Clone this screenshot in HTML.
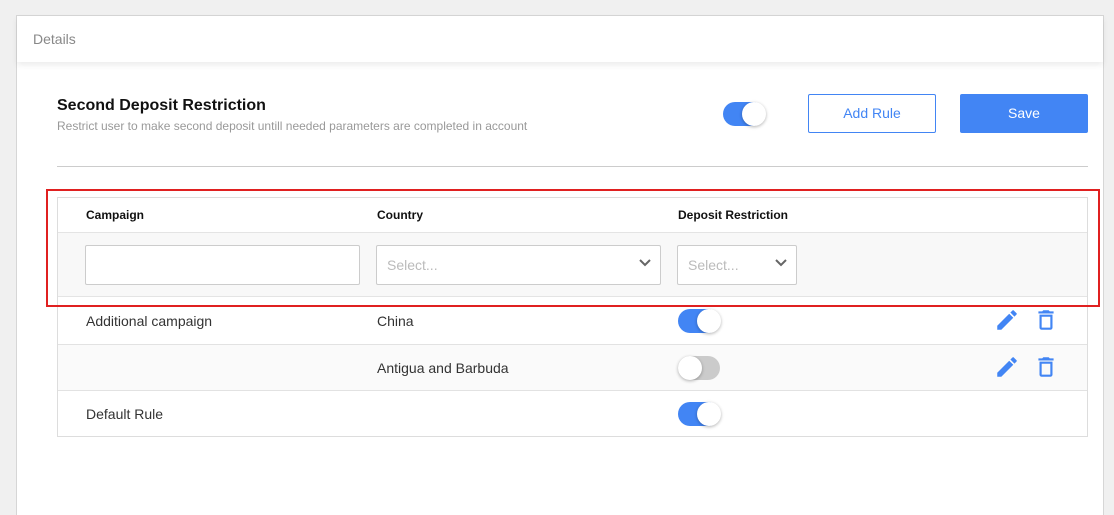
<!DOCTYPE html>
<html><head><style>
*{box-sizing:border-box;margin:0;padding:0}
body{width:1114px;height:506px;background:#f0f0f0;font-family:"Liberation Sans",sans-serif;position:relative;overflow:hidden}
.abs{position:absolute}
.card{left:16px;top:15px;width:1088px;height:500px;background:#fff;border-left:1px solid #d6d6d6;border-top:1px solid #d6d6d6;border-right:1px solid #d6d6d6}
.hdr{left:17px;top:16px;width:1086px;height:46px;background:#fff;box-shadow:0 3px 6px rgba(0,0,0,.08)}
.tog{width:42px;height:24px;border-radius:12px}
.tog .k{position:absolute;top:0;width:24px;height:24px;border-radius:50%;background:#fff;box-shadow:0 1px 3px rgba(0,0,0,.3)}
.on{background:#4285f4}.on .k{right:-1px}
.off{background:#cbcbcb}.off .k{left:0}
.sel{height:40px;border:1px solid #ccc;background:#fff;border-radius:2px;color:#bbb;font-size:14px;padding:11px 10px}
.txt{font-size:14px;color:#333}
.th{font-size:12px;font-weight:bold;color:#111}
</style></head><body>
<div class="abs card"></div>
<div class="abs hdr"></div>
<div class="abs" style="left:33px;top:31px;font-size:14px;color:#888">Details</div>
<div class="abs" style="left:57px;top:97px;font-size:16px;font-weight:bold;color:#111">Second Deposit Restriction</div>
<div class="abs" style="left:57px;top:119px;font-size:12px;color:#999">Restrict user to make second deposit untill needed parameters are completed in account</div>
<div class="abs tog on" style="left:723px;top:102px"><div class="k"></div></div>
<div class="abs" style="left:808px;top:94px;width:128px;height:39px;border:1px solid #4285f4;border-radius:2px;color:#4285f4;font-size:14px;text-align:center;line-height:37px">Add Rule</div>
<div class="abs" style="left:960px;top:94px;width:128px;height:39px;background:#4285f4;border-radius:2px;color:#fff;font-size:14px;text-align:center;line-height:39px">Save</div>
<div class="abs" style="left:57px;top:166px;width:1031px;height:1px;background:#ccc"></div>
<div class="abs" style="left:57px;top:197px;width:1031px;height:240px;border:1px solid #ddd"></div>
<div class="abs" style="left:58px;top:232px;width:1029px;height:65px;background:#f8f8f8;border-top:1px solid #e4e4e4;border-bottom:1px solid #e4e4e4"></div>
<div class="abs" style="left:58px;top:344px;width:1029px;height:47px;background:#fafafa;border-top:1px solid #e2e2e2;border-bottom:1px solid #e2e2e2"></div>
<div class="abs th" style="left:86px;top:208px">Campaign</div>
<div class="abs th" style="left:377px;top:208px">Country</div>
<div class="abs th" style="left:678px;top:208px">Deposit Restriction</div>
<div class="abs sel" style="left:85px;top:245px;width:275px"></div>
<div class="abs sel" style="left:376px;top:245px;width:285px">Select...</div>
<div class="abs sel" style="left:677px;top:245px;width:120px">Select...</div>
<svg class="abs" style="left:639px;top:259px" width="12" height="8"><path d="M1 1l5 5 5-5" stroke="#666" stroke-width="2" fill="none"/></svg>
<svg class="abs" style="left:775px;top:259px" width="12" height="8"><path d="M1 1l5 5 5-5" stroke="#666" stroke-width="2" fill="none"/></svg>
<div class="abs" style="left:46px;top:189px;width:1054px;height:118px;border:2px solid #e02020"></div>
<div class="abs txt" style="left:86px;top:313px">Additional campaign</div>
<div class="abs txt" style="left:377px;top:313px">China</div>
<div class="abs txt" style="left:377px;top:360px">Antigua and Barbuda</div>
<div class="abs txt" style="left:86px;top:406px">Default Rule</div>
<div class="abs tog on" style="left:678px;top:309px"><div class="k"></div></div>
<div class="abs tog off" style="left:678px;top:356px"><div class="k"></div></div>
<div class="abs tog on" style="left:678px;top:402px"><div class="k"></div></div>
<svg class="abs" style="left:994px;top:307px" width="26" height="26" viewBox="0 0 24 24"><path fill="#4285f4" d="M3 17.25V21h3.75L17.8 9.94l-3.75-3.75L3 17.25zM20.7 7.04a1 1 0 000-1.41l-2.34-2.34a1 1 0 00-1.41 0l-1.83 1.83 3.75 3.75 1.83-1.83z"/></svg>
<svg class="abs" style="left:1033px;top:307px" width="26" height="26" viewBox="0 0 24 24"><path fill="#4285f4" d="M6 19a2 2 0 002 2h8a2 2 0 002-2V7H6v12zm2-10h8v10H8V9zm7.5-5l-1-1h-5l-1 1H5v2h14V4z"/></svg>
<svg class="abs" style="left:994px;top:354px" width="26" height="26" viewBox="0 0 24 24"><path fill="#4285f4" d="M3 17.25V21h3.75L17.8 9.94l-3.75-3.75L3 17.25zM20.7 7.04a1 1 0 000-1.41l-2.34-2.34a1 1 0 00-1.41 0l-1.83 1.83 3.75 3.75 1.83-1.83z"/></svg>
<svg class="abs" style="left:1033px;top:354px" width="26" height="26" viewBox="0 0 24 24"><path fill="#4285f4" d="M6 19a2 2 0 002 2h8a2 2 0 002-2V7H6v12zm2-10h8v10H8V9zm7.5-5l-1-1h-5l-1 1H5v2h14V4z"/></svg>
</body></html>
